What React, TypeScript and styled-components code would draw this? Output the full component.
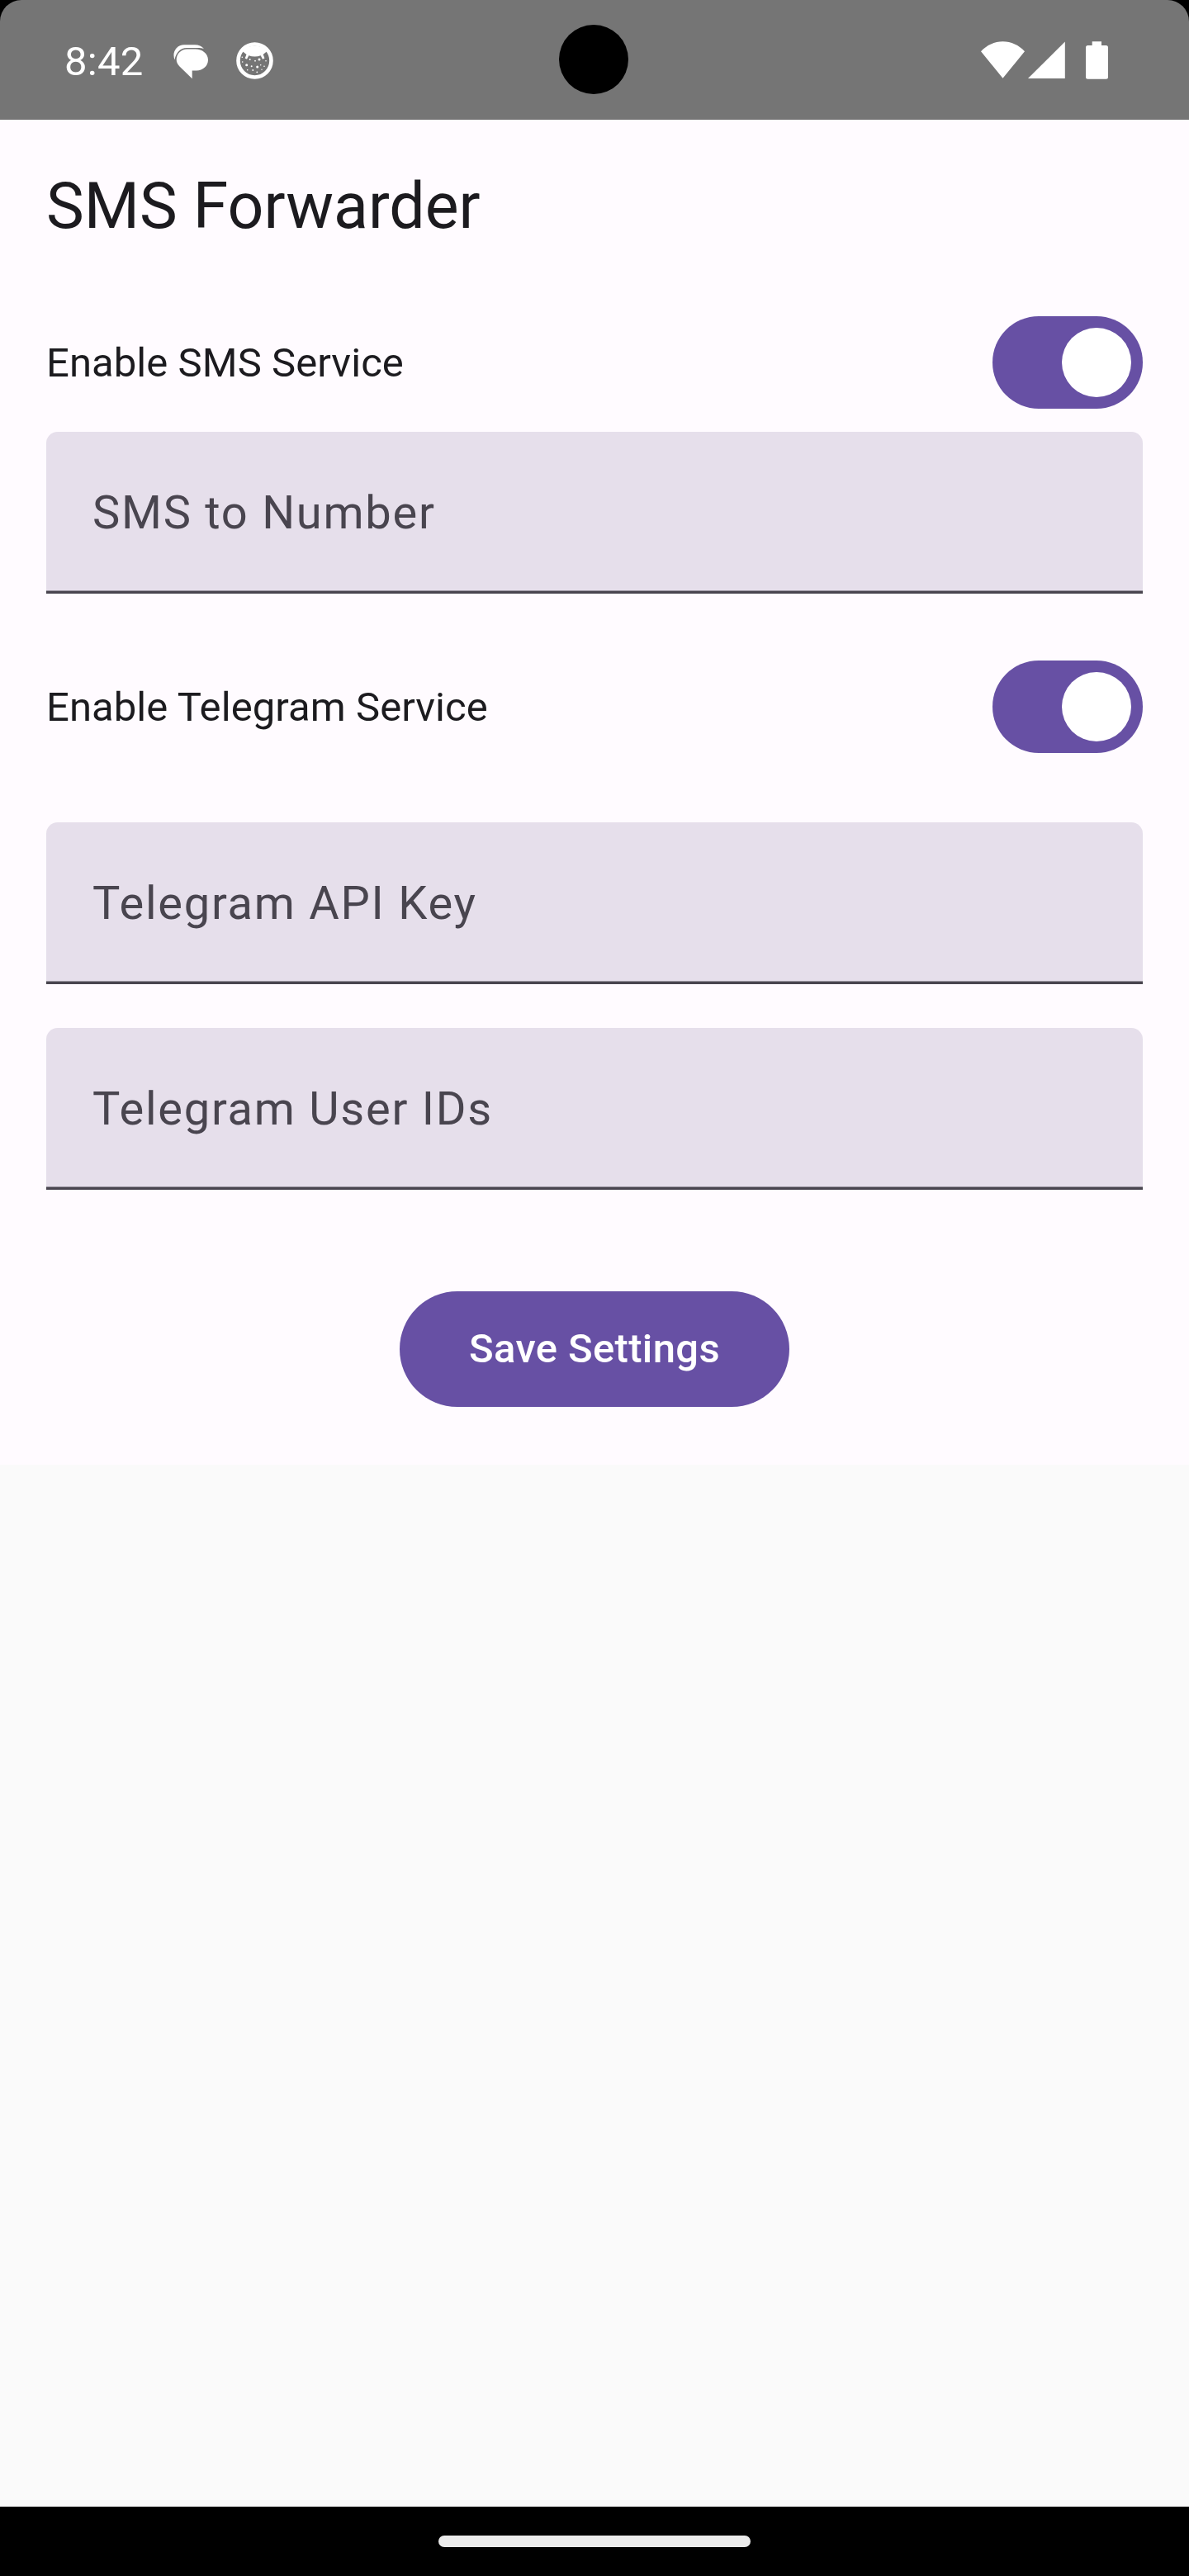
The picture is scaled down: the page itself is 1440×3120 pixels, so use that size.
import React, { useState } from 'react';
import styled, { createGlobalStyle } from 'styled-components';

const GlobalStyle = createGlobalStyle`
  * { box-sizing: border-box; }
  html, body { margin: 0; padding: 0; background: #000; }
  body, button, input { font-family: Roboto, "Noto Sans", sans-serif; }
`;

const Screen = styled.div`
  width: 1440px;
  height: 3120px;
  display: flex;
  flex-direction: column;
  background: #000;
  overflow: hidden;
`;

const StatusBar = styled.header`
  position: relative;
  height: 145px;
  flex: none;
  display: flex;
  align-items: flex-start;
  justify-content: space-between;
  padding: 0 98px 0 78px;
  background: #757575;
  border-radius: 26px 26px 0 0;
`;

const Cluster = styled.div`
  display: flex;
  align-items: flex-start;
`;

const Clock = styled.time`
  width: 132px;
  margin-top: 40px;
  font-size: 49px;
  line-height: 70px;
  letter-spacing: 0.3px;
  color: #fff;
`;

const Glyph = styled.svg<{ $top: number; $gap?: number }>`
  display: block;
  flex: none;
  margin-top: ${(p) => p.$top}px;
  margin-left: ${(p) => p.$gap ?? 0}px;
  fill: #fff;
`;

const Camera = styled.div`
  position: absolute;
  left: 677px;
  top: 30px;
  width: 84px;
  height: 84px;
  border-radius: 50%;
  background: #000;
`;

const Body = styled.div`
  flex: 1;
  background: #fafafa;
`;

const Form = styled.main`
  display: flex;
  flex-direction: column;
  padding: 56px 56px 70px;
  background: #fffbff;
`;

const Title = styled.h1`
  margin: 0 0 84px;
  font-size: 77px;
  line-height: 98px;
  font-weight: 400;
  color: #1c1b1f;
`;

const SettingRow = styled.div<{ $after: number }>`
  display: flex;
  align-items: center;
  justify-content: space-between;
  height: 112px;
  margin-bottom: ${(p) => p.$after}px;
`;

const SettingLabel = styled.span`
  font-size: 49px;
  line-height: 70px;
  padding-top: 1px;
  letter-spacing: 0.07px;
  color: #1c1b1f;
`;

const Track = styled.button<{ $on: boolean }>`
  display: flex;
  align-items: center;
  justify-content: ${(p) => (p.$on ? 'flex-end' : 'flex-start')};
  width: 182px;
  height: 112px;
  padding: 14px;
  border: 0;
  border-radius: 56px;
  background: ${(p) => (p.$on ? '#6750a4' : '#e7e0ec')};
`;

const Thumb = styled.span<{ $on: boolean }>`
  width: 84px;
  height: 84px;
  border-radius: 50%;
  background: ${(p) => (p.$on ? '#fff' : '#79747e')};
`;

const Field = styled.input<{ $after: number }>`
  display: block;
  width: 100%;
  height: 196px;
  margin: 0 0 ${(p) => p.$after}px;
  padding: 0 56px;
  border: 0;
  border-radius: 14px 14px 0 0;
  outline: 0;
  background: linear-gradient(#49454f, #49454f) 0 100% / 100% 3px no-repeat,
    linear-gradient(#98939e, #98939e) 0 calc(100% - 3px) / 100% 1px no-repeat,
    #e6dfeb;
  font-size: 56px;
  letter-spacing: 1.75px;
  color: #1c1b1f;

  &::placeholder {
    color: #49454f;
    opacity: 1;
  }
`;

const SaveButton = styled.button`
  align-self: center;
  height: 140px;
  padding: 0 84px;
  border: 0;
  border-radius: 70px;
  background: #6750a4;
  font-size: 49px;
  line-height: 70px;
  font-weight: 500;
  letter-spacing: 0.35px;
  white-space: nowrap;
  color: #fff;
`;

const NavBar = styled.footer`
  flex: none;
  display: flex;
  justify-content: center;
  height: 84px;
  padding-top: 35px;
  background: #000;
`;

const NavHandle = styled.div`
  width: 378px;
  height: 14px;
  border-radius: 7px;
  background: #ebebeb;
`;

function MessagesIcon() {
  return (
    <Glyph width="42" height="42" viewBox="0 0 42 42" $top={54}>
      <path d="M1.6 18.5C-.3 14 0 8.5 3.5 4.5C6 1.5 9.5.3 13 .3H26C30.5.3 34.5 2 37 5.2C34.5 4.2 32 4 29.5 4H16C9 4 2.5 10 1.6 18.5Z" />
      <path d="M16.5 5.6H26.5C35 5.6 42 11 42 18.5S35.5 31.4 28 31.4H22.7V41.2L7.5 26.5C5 24 3.7 21.5 3.7 18.3C3.7 11.3 9.5 5.6 16.5 5.6Z" />
    </Glyph>
  );
}

const specks = [
  [7.3, 18.3, 0.8],
  [12.7, 27.7, 1.5],
  [16.7, 21, 1],
  [28, 21, 1.5],
  [23, 22.7, 0.9],
  [36, 22.7, 0.8],
  [7.7, 24, 0.8],
  [29.7, 27.7, 0.8],
  [18.7, 29.3, 1],
  [25.7, 30, 1.5],
  [34, 29.3, 0.8],
  [13.7, 33.7, 0.8],
  [20.3, 34, 0.9],
  [25.3, 36.3, 0.9],
  [31, 33.3, 0.7],
];

function DebugIcon() {
  return (
    <Glyph width="45" height="45" viewBox="0 0 45 45" $top={51} $gap={34}>
      <circle cx="22.5" cy="22.5" r="20" fill="none" stroke="#fff" strokeWidth="4.6" />
      <path d="M8.2 11.5C12 2 33 2 36.8 11.5L32.7 15L34.5 19.5L32 20.7L29.7 16.3C25 17.9 20 17.9 15.3 16.3L13 20.7L10.7 19.5L12.5 15Z" />
      {specks.map(([x, y, r]) => (
        <circle key={`${x}-${y}`} cx={x} cy={y} r={r} />
      ))}
    </Glyph>
  );
}

function WifiIcon() {
  return (
    <Glyph width="53" height="46" viewBox="0 0 53 46" $top={50}>
      <path d="M0 12.3C7 4.5 16.5.2 26.5.2S46 4.5 53 12.3L26.5 44.8Z" />
    </Glyph>
  );
}

function SignalIcon() {
  return (
    <Glyph width="45" height="46" viewBox="0 0 45 46" $top={50} $gap={4}>
      <path d="M0 45L44.8.5V45Z" />
    </Glyph>
  );
}

function BatteryIcon() {
  return (
    <Glyph width="27" height="46" viewBox="0 0 27 46" $top={50} $gap={25}>
      <path d="M7.7.3H19V5H24.5Q27 5 27 7.5V43.2Q27 45.7 24.5 45.7H2.5Q0 45.7 0 43.2V7.5Q0 5 2.5 5H7.7Z" />
    </Glyph>
  );
}

function Setting({ label, after }: { label: string; after: number }) {
  const [on, setOn] = useState(true);
  return (
    <SettingRow $after={after}>
      <SettingLabel>{label}</SettingLabel>
      <Track $on={on} role="switch" aria-checked={on} aria-label={label} onClick={() => setOn(!on)}>
        <Thumb $on={on} />
      </Track>
    </SettingRow>
  );
}

export default function App() {
  return (
    <>
      <GlobalStyle />
      <Screen>
        <StatusBar>
          <Cluster>
            <Clock>8:42</Clock>
            <MessagesIcon />
            <DebugIcon />
          </Cluster>
          <Camera />
          <Cluster>
            <WifiIcon />
            <SignalIcon />
            <BatteryIcon />
          </Cluster>
        </StatusBar>
        <Body>
          <Form>
            <Title>SMS Forwarder</Title>
            <Setting label="Enable SMS Service" after={28} />
            <Field $after={81} placeholder="SMS to Number" />
            <Setting label="Enable Telegram Service" after={84} />
            <Field $after={53} placeholder="Telegram API Key" />
            <Field $after={123} placeholder="Telegram User IDs" />
            <SaveButton>Save Settings</SaveButton>
          </Form>
        </Body>
        <NavBar>
          <NavHandle />
        </NavBar>
      </Screen>
    </>
  );
}
